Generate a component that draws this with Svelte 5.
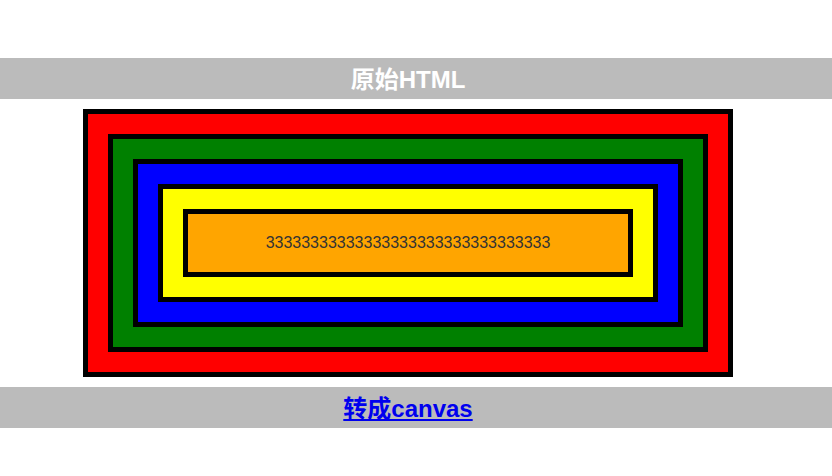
<script>
  const digits = '3'.repeat(32);
</script>

<main>
  <h2 class="bar">原始HTML</h2>
  <section class="stage">
    <div class="box red">
      <div class="box green">
        <div class="box blue">
          <div class="box yellow">
            <div class="box orange">{digits}</div>
          </div>
        </div>
      </div>
    </div>
  </section>
  <h2 class="bar"><a href="#canvas">转成canvas</a></h2>
</main>

<style>
  :global(body) {
    margin: 0;
    background: #fff;
  }

  main {
    padding-top: 58px;
    color: #333;
    font: 16px/18px "Liberation Sans", Arial, "Noto Sans CJK SC", sans-serif;
    text-align: center;
  }

  .bar {
    margin: 0;
    padding: 6px 16px 4px 0;
    background: #bbb;
    color: #fff;
    font-size: 24px;
    line-height: 31px;
  }

  .bar a {
    color: #00e;
    text-decoration: underline;
  }

  .stage {
    padding: 10px 16px 10px 0;
  }

  .box {
    padding: 20px;
    border: 5px solid #000;
  }

  .red {
    box-sizing: border-box;
    max-width: 650px;
    margin: 0 auto;
    background: red;
  }

  .green {
    background: green;
  }

  .blue {
    background: blue;
  }

  .yellow {
    background: yellow;
  }

  .orange {
    background: orange;
    overflow-wrap: anywhere;
  }
</style>
